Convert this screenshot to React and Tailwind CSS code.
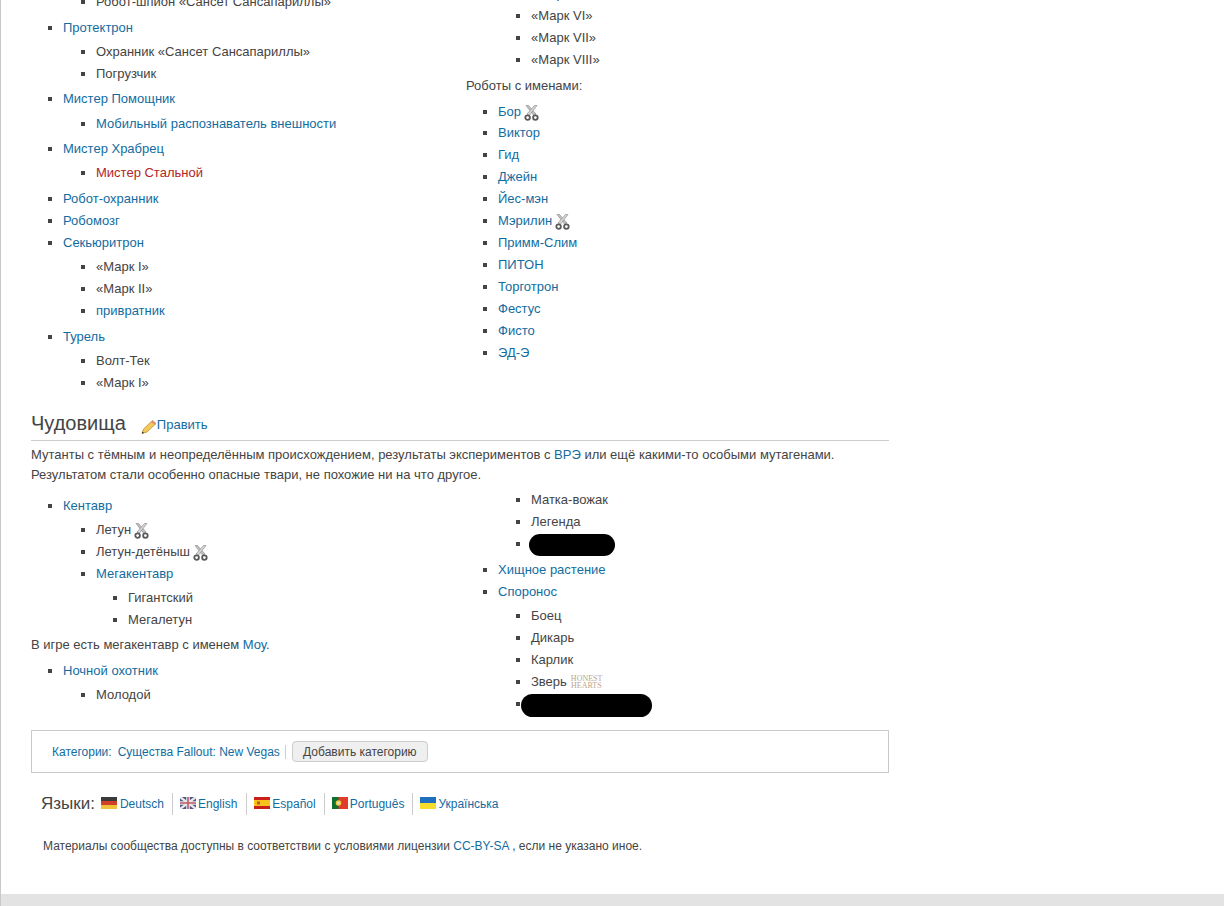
const LINK = "text-[#126c9f]";

function Scissors() {
  return (
    <svg width="15" height="16" viewBox="0 0 15 16" className="inline-block align-[-5px] ml-[3px]">
      <path d="M2 0.5 L9.8 10.5 L12 9 L4.5 0.5 Z" fill="#c2c2c2" stroke="#858585" strokeWidth="0.6" />
      <path d="M13 0.5 L5.2 10.5 L3 9 L10.5 0.5 Z" fill="#d6d6d6" stroke="#858585" strokeWidth="0.6" />
      <circle cx="3.6" cy="12.6" r="2.3" fill="none" stroke="#5a5a5a" strokeWidth="1.8" />
      <circle cx="11.4" cy="12.6" r="2.3" fill="none" stroke="#5a5a5a" strokeWidth="1.8" />
    </svg>
  );
}

function Pencil() {
  return (
    <svg width="16" height="16" viewBox="0 0 16 16">
      <path d="M1 14.5 L2.5 10 L11.5 1.5 L15 4.5 L6 13 Z" fill="#f2c95c" stroke="#b98f2e" strokeWidth="0.8" />
      <path d="M11.5 1.5 L15 4.5 L13.5 6 L10 3 Z" fill="#e58f7c" />
      <path d="M1 14.5 L1.5 12.8 L3 14 Z" fill="#111" />
    </svg>
  );
}

function Flag({ children }) {
  return (
    <svg width="16" height="12" viewBox="0 0 16 12" className="shrink-0 -mt-[3px]">
      {children}
    </svg>
  );
}

const De = () => (
  <Flag>
    <rect width="16" height="4" fill="#3a3a3a" />
    <rect y="4" width="16" height="4" fill="#cf3f2a" />
    <rect y="8" width="16" height="4" fill="#f0c23c" />
  </Flag>
);
const En = () => (
  <Flag>
    <rect width="16" height="12" fill="#4a5488" />
    <path d="M0 0L16 12M16 0L0 12" stroke="#e8e8e8" strokeWidth="2.4" />
    <path d="M8 0V12M0 6H16" stroke="#e8e8e8" strokeWidth="3.6" />
    <path d="M8 0V12M0 6H16" stroke="#c05a66" strokeWidth="1.6" />
  </Flag>
);
const Es = () => (
  <Flag>
    <rect width="16" height="12" fill="#c9201c" />
    <rect y="3" width="16" height="6" fill="#f6c21c" />
    <rect x="3" y="4.5" width="3" height="3" fill="#c4562c" />
  </Flag>
);
const Pt = () => (
  <Flag>
    <rect width="16" height="12" fill="#e23b2c" />
    <rect width="6.5" height="12" fill="#11702c" />
    <circle cx="6.5" cy="6" r="2.8" fill="#f0c93c" />
    <circle cx="6.5" cy="6" r="1.5" fill="#d8d8d8" />
  </Flag>
);
const Ua = () => (
  <Flag>
    <rect width="16" height="6" fill="#1d6fc0" />
    <rect y="6" width="16" height="6" fill="#f7dc2c" />
  </Flag>
);

function A({ children, red }) {
  return <span className={red ? "text-[#b32424]" : LINK}>{children}</span>;
}

function Li({ children, mt = "" }) {
  return <li className={`h-[22px] leading-[22px] ${mt}`}>{children}</li>;
}

function Sub({ children, className = "", pl = "pl-[33px]" }) {
  return <ul className={`list-[square] ${pl} ${className}`}>{children}</ul>;
}

function Honest() {
  return (
    <span className="inline-flex flex-col align-middle ml-[4px] -mt-[1px] w-[31px] text-center font-['Liberation_Serif',serif] text-[8px] leading-[7px] text-[#b9a68a]">
      <span>HONEST</span>
      <span>HEARTS</span>
    </span>
  );
}

function Blob({ className }) {
  return <span className={`inline-block bg-black rounded-full ${className}`} />;
}

export default function App() {
  return (
    <div className="h-[906px] overflow-hidden bg-white border-l border-[#c9c9c9] text-[13px] text-[#444] font-['Liberation_Sans',Arial,sans-serif] flex flex-col">
      <div className="pl-[30px] w-[888px] -mt-[9px] flex-1">
        <div className="flex">
          <div className="w-[435px]">
            <ul className="list-[square] pl-[32px]">
              <li className="list-none">
                <Sub className="mb-[4px]">
                  <Li>Робот-шпион «Сансет Сансапариллы»</Li>
                </Sub>
              </li>
              <Li mt="!h-auto">
                <A>Протектрон</A>
                <Sub className="mt-[2px] mb-[3px]">
                  <Li>Охранник «Сансет Сансапариллы»</Li>
                  <Li>Погрузчик</Li>
                </Sub>
              </Li>
              <Li mt="!h-auto">
                <A>Мистер Помощник</A>
                <Sub className="mt-[3px] mb-[3px]">
                  <Li><A>Мобильный распознаватель внешности</A></Li>
                </Sub>
              </Li>
              <Li mt="!h-auto">
                <A>Мистер Храбрец</A>
                <Sub className="mt-[2px] mb-[4px]">
                  <Li><A red>Мистер Стальной</A></Li>
                </Sub>
              </Li>
              <Li><A>Робот-охранник</A></Li>
              <Li><A>Робомозг</A></Li>
              <Li mt="!h-auto">
                <A>Секьюритрон</A>
                <Sub className="mt-[2px] mb-[4px]">
                  <Li>«Марк I»</Li>
                  <Li>«Марк II»</Li>
                  <Li><A>привратник</A></Li>
                </Sub>
              </Li>
              <Li mt="!h-auto">
                <A>Турель</A>
                <Sub className="mt-[2px]">
                  <Li>Волт-Тек</Li>
                  <Li>«Марк I»</Li>
                </Sub>
              </Li>
            </ul>
          </div>
          <div className="w-[423px] -mt-[8px]">
            <ul className="list-[square] pl-[65px]">
              <Li>«Марк V»</Li>
              <Li>«Марк VI»</Li>
              <Li>«Марк VII»</Li>
              <Li>«Марк VIII»</Li>
            </ul>
            <p className="h-[22px] leading-[22px] mt-[4px] mb-[4px]">Роботы с именами:</p>
            <ul className="list-[square] pl-[32px]">
              <Li mt="!h-[21px]"><A>Бор</A><Scissors /></Li>
              <Li><A>Виктор</A></Li>
              <Li><A>Гид</A></Li>
              <Li><A>Джейн</A></Li>
              <Li><A>Йес-мэн</A></Li>
              <Li><A>Мэрилин</A><Scissors /></Li>
              <Li><A>Примм-Слим</A></Li>
              <Li><A>ПИТОН</A></Li>
              <Li><A>Торготрон</A></Li>
              <Li><A>Фестус</A></Li>
              <Li><A>Фисто</A></Li>
              <Li><A>ЭД-Э</A></Li>
            </ul>
          </div>
        </div>

        <div className="mt-[10px] h-[37px] flex items-end border-b border-[#ccc] pb-[5px]">
          <h2 className="text-[20px] leading-[24px] mr-[15px]">Чудовища</h2>
          <Pencil />
          <A><span className="leading-[20px]">Править</span></A>
        </div>
        <p className="mt-[4px] leading-[20px]">
          Мутанты с тёмным и неопределённым происхождением, результаты экспериментов с <A>ВРЭ</A> или ещё какими-то особыми мутагенами. Результатом стали особенно опасные твари, не похожие ни на что другое.
        </p>

        <div className="flex mt-[4px]">
          <div className="w-[435px]">
            <ul className="list-[square] pl-[32px] mt-[6px]">
              <Li mt="!h-auto">
                <A>Кентавр</A>
                <Sub className="mt-[2px]">
                  <Li>Летун<Scissors /></Li>
                  <Li>Летун-детёныш<Scissors /></Li>
                  <Li mt="!h-auto">
                    <A>Мегакентавр</A>
                    <Sub className="mt-[2px]" pl="pl-[32px]">
                      <Li>Гигантский</Li>
                      <Li>Мегалетун</Li>
                    </Sub>
                  </Li>
                </Sub>
              </Li>
            </ul>
            <p className="h-[22px] leading-[22px] mt-[3px] mb-[4px]">В игре есть мегакентавр с именем <A>Моу</A>.</p>
            <ul className="list-[square] pl-[32px]">
              <Li mt="!h-auto">
                <A>Ночной охотник</A>
                <Sub className="mt-[2px]">
                  <Li>Молодой</Li>
                </Sub>
              </Li>
            </ul>
          </div>
          <div className="w-[423px]">
            <ul className="list-[square] pl-[32px]">
              <li className="list-none">
                <Sub className="mb-[4px]">
                  <Li>Матка-вожак</Li>
                  <Li>Легенда</Li>
                  <Li><Blob className="w-[86px] h-[22px] align-top mt-[1px] -ml-[2px]" /></Li>
                </Sub>
              </li>
              <Li><A>Хищное растение</A></Li>
              <Li mt="!h-auto">
                <A>Споронос</A>
                <Sub className="mt-[2px]">
                  <Li>Боец</Li>
                  <Li>Дикарь</Li>
                  <Li>Карлик</Li>
                  <Li>Зверь<Honest /></Li>
                  <Li><Blob className="w-[131px] h-[23px] align-top mt-[1px] -ml-[10px]" /></Li>
                </Sub>
              </Li>
            </ul>
          </div>
        </div>

        <div className="mt-[15px] h-[43px] border border-[#c9c9c9] flex items-center pl-[20px] text-[12px]">
          <A>Категории:</A>
          <span className="ml-[6px]"><A>Существа Fallout: New Vegas</A></span>
          <span className="ml-[5px] h-[14px] border-l border-[#ccc]" />
          <button className="ml-[6px] h-[21px] w-[136px] border border-[#ccc] rounded-[4px] bg-[#efefef] text-[#444] text-[12px]">
            Добавить категорию
          </button>
        </div>

        <div className="mt-[20px] ml-[10px] flex items-center h-[22px] text-[12px]">
          <span className="text-[17px] mr-[6px]">Языки:</span>
          <span className="flex items-center gap-[3px] pr-[8px] border-r border-[#ccc] h-[22px]"><De /><A>Deutsch</A></span>
          <span className="flex items-center gap-[2px] pl-[7px] pr-[9px] border-r border-[#ccc] h-[22px]"><En /><A>English</A></span>
          <span className="flex items-center gap-[2px] pl-[7px] pr-[8px] border-r border-[#ccc] h-[22px]"><Es /><A>Español</A></span>
          <span className="flex items-center gap-[2px] pl-[7px] pr-[8px] border-r border-[#ccc] h-[22px]"><Pt /><A>Português</A></span>
          <span className="flex items-center gap-[2px] pl-[7px] h-[22px]"><Ua /><A>Українська</A></span>
        </div>

        <p className="mt-[21px] ml-[12px] text-[12px] leading-[20px]">
          Материалы сообщества доступны в соответствии с условиями лицензии <A>CC-BY-SA</A> , если не указано иное.
        </p>
      </div>
      <div className="h-[12px] bg-[#e3e3e3]" />
    </div>
  );
}
